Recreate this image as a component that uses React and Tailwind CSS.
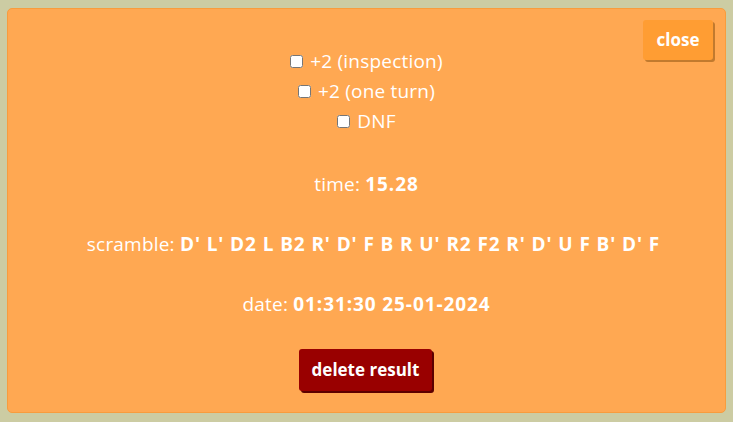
import { useState } from 'react';

export default function App() {
  const [flags, setFlags] = useState({ inspection: false, oneTurn: false, dnf: false });

  const toggle = (key) => setFlags((prev) => ({ ...prev, [key]: !prev[key] }));

  const options = [
    { key: 'inspection', label: '+2 (inspection)' },
    { key: 'oneTurn', label: '+2 (one turn)' },
    { key: 'dnf', label: 'DNF' }
  ];

  return (
    <div className="h-[422px] w-[733px] bg-[#cccca3] px-[7px] pt-[8px] pb-[9px] font-['Open_Sans','Liberation_Sans',sans-serif] text-[19px] tracking-[0.2px] text-white">
      <div className="relative flex h-full flex-col items-center rounded-[5px] border border-[#f89c3d] bg-[#ffa852] pt-[37px]">
        <button className="absolute right-[12px] top-[11px] h-[40px] w-[70px] rounded-[3px] bg-[#ff9d33] text-[17px] font-bold tracking-normal text-white shadow-[2px_2px_0_#c17a2e]">
          close
        </button>

        <div className="flex flex-col items-center">
          {options.map((opt) => (
            <label key={opt.key} className="flex h-[30px] items-center">
              <input
                type="checkbox"
                checked={flags[opt.key]}
                onChange={() => toggle(opt.key)}
                className="mr-[7px] h-[13px] w-[13px]"
              />
              {opt.label}
            </label>
          ))}
        </div>

        <p className="mt-[33px] leading-[30px]">
          time: <b className="tracking-[0.9px]">15.28</b>
        </p>
        <p className="mt-[30px] pl-[14px] leading-[30px]">
          scramble: <b className="tracking-[0.9px]">D' L' D2 L B2 R' D' F B R U' R2 F2 R' D' U F B' D' F</b>
        </p>
        <p className="mt-[30px] leading-[30px]">
          date: <b className="tracking-[0.9px]">01:31:30 25-01-2024</b>
        </p>

        <button className="mt-[30px] h-[42px] w-[133px] -translate-x-[1px] rounded-[3px] bg-[#990000] text-[17px] font-bold tracking-normal text-white shadow-[2px_2px_0_#5c0000]">
          delete result
        </button>
      </div>
    </div>
  );
}
